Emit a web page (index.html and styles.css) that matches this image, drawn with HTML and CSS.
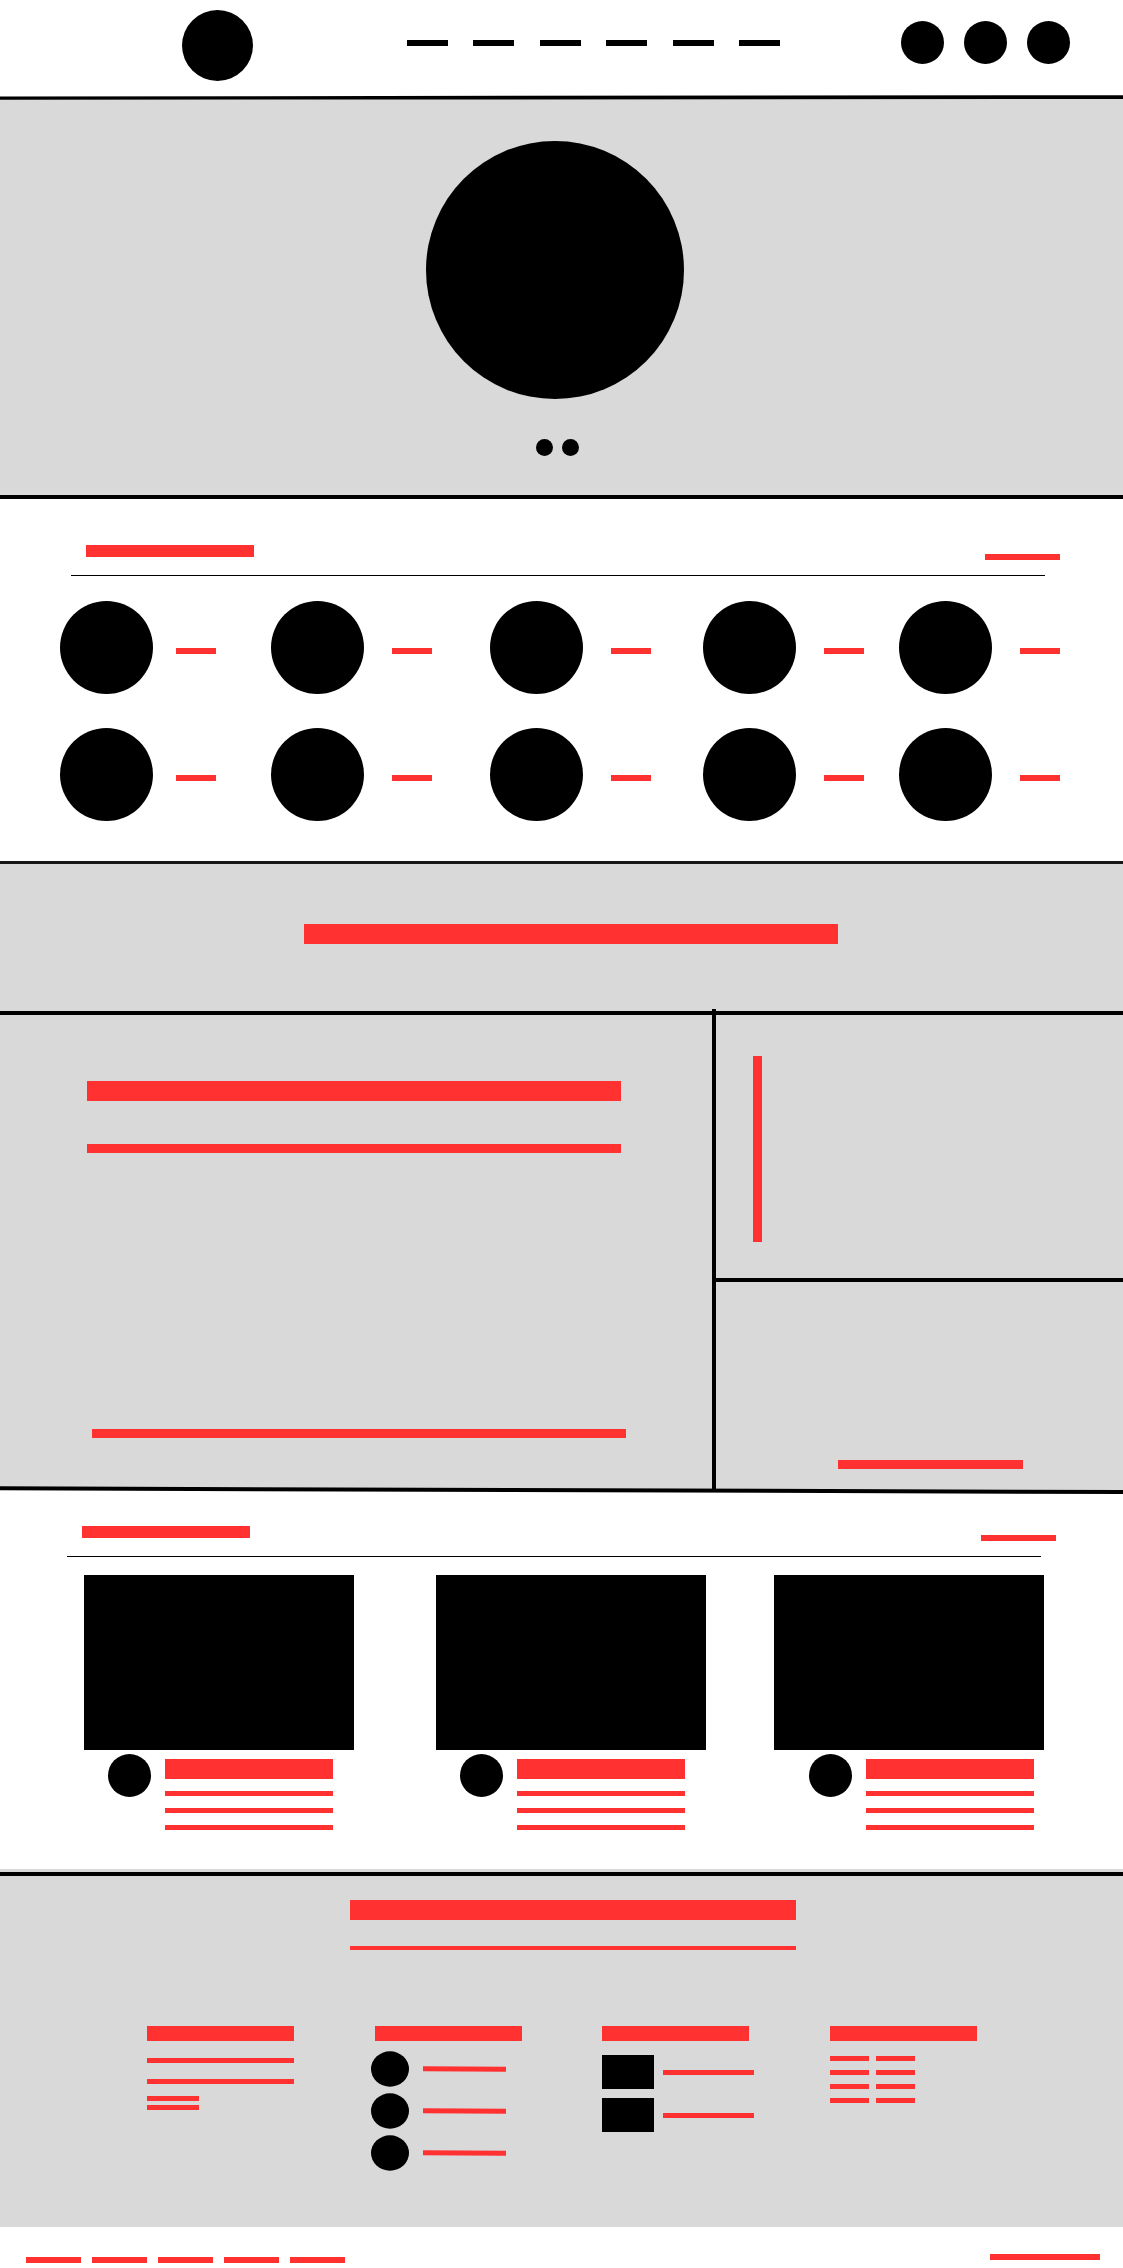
FILE: index.html
```html
<!DOCTYPE html>
<html lang="en">
<head>
<meta charset="utf-8">
<meta name="viewport" content="width=device-width, initial-scale=1">
<title>Home</title>
<link rel="stylesheet" href="styles.css">
</head>
<body>
<header class="header">
  <a class="dot logo" href="#" aria-label="Home"></a>
  <nav class="nav" aria-label="Main">
    <a class="nav-link" href="#" aria-label="Link 1"></a>
    <a class="nav-link" href="#" aria-label="Link 2"></a>
    <a class="nav-link" href="#" aria-label="Link 3"></a>
    <a class="nav-link" href="#" aria-label="Link 4"></a>
    <a class="nav-link" href="#" aria-label="Link 5"></a>
    <a class="nav-link" href="#" aria-label="Link 6"></a>
  </nav>
  <div class="actions">
    <button class="dot action" type="button" aria-label="Search"></button>
    <button class="dot action" type="button" aria-label="Account"></button>
    <button class="dot action" type="button" aria-label="Cart"></button>
  </div>
</header>
<svg class="divider divider-top" viewBox="0 0 100 5" preserveAspectRatio="none" aria-hidden="true"><path class="shade" d="M0 3L100 2V5H0Z"/><path d="M0 1.4L100 0.2V4L0 4.8Z"/></svg>

<main>
  <section class="hero">
    <div class="dot hero-image"></div>
    <div class="pager">
      <button class="dot pager-dot" type="button" aria-label="Slide 1"></button>
      <button class="dot pager-dot" type="button" aria-label="Slide 2"></button>
    </div>
  </section>

  <section class="categories">
    <div class="section-head">
      <div class="bar section-title"></div>
      <a class="bar section-link" href="#" aria-label="See all categories"></a>
    </div>
    <div class="category-grid">
      <a class="category" href="#" aria-label="Category 1"><span class="dot category-image"></span><span class="bar category-name"></span></a>
      <a class="category" href="#" aria-label="Category 2"><span class="dot category-image"></span><span class="bar category-name"></span></a>
      <a class="category" href="#" aria-label="Category 3"><span class="dot category-image"></span><span class="bar category-name"></span></a>
      <a class="category" href="#" aria-label="Category 4"><span class="dot category-image"></span><span class="bar category-name"></span></a>
      <a class="category" href="#" aria-label="Category 5"><span class="dot category-image"></span><span class="bar category-name"></span></a>
      <a class="category" href="#" aria-label="Category 6"><span class="dot category-image"></span><span class="bar category-name"></span></a>
      <a class="category" href="#" aria-label="Category 7"><span class="dot category-image"></span><span class="bar category-name"></span></a>
      <a class="category" href="#" aria-label="Category 8"><span class="dot category-image"></span><span class="bar category-name"></span></a>
      <a class="category" href="#" aria-label="Category 9"><span class="dot category-image"></span><span class="bar category-name"></span></a>
      <a class="category" href="#" aria-label="Category 10"><span class="dot category-image"></span><span class="bar category-name"></span></a>
    </div>
  </section>

  <section class="banner">
    <div class="bar banner-title"></div>
  </section>

  <section class="promos">
    <div class="promo promo-main">
      <div class="bar promo-title"></div>
      <div class="bar promo-text"></div>
      <a class="bar promo-text promo-more" href="#" aria-label="Read more"></a>
    </div>
    <div class="promo-side">
      <div class="promo promo-upper"><div class="bar promo-upright"></div></div>
      <div class="promo promo-lower"><a class="bar promo-action" href="#" aria-label="Open offer"></a></div>
    </div>
  </section>
  <svg class="divider divider-slope" viewBox="0 0 1123 8" preserveAspectRatio="none" aria-hidden="true"><path class="shade" d="M0 0H1123V6L0 2Z"/><path d="M0 0.3L1123 4V8L0 4.3Z"/><path d="M712 0H716V5H712Z"/></svg>

  <section class="articles">
    <div class="section-head">
      <div class="bar section-title"></div>
      <a class="bar section-link" href="#" aria-label="See all articles"></a>
    </div>
    <div class="card-row">
      <article class="card">
        <div class="card-image"></div>
        <div class="card-meta">
          <div class="dot avatar"></div>
          <div class="card-text"><div class="bar card-title"></div><div class="bar card-line"></div><div class="bar card-line"></div><div class="bar card-line"></div></div>
        </div>
      </article>
      <article class="card">
        <div class="card-image"></div>
        <div class="card-meta">
          <div class="dot avatar"></div>
          <div class="card-text"><div class="bar card-title"></div><div class="bar card-line"></div><div class="bar card-line"></div><div class="bar card-line"></div></div>
        </div>
      </article>
      <article class="card card-last">
        <div class="card-image"></div>
        <div class="card-meta">
          <div class="dot avatar"></div>
          <div class="card-text"><div class="bar card-title"></div><div class="bar card-line"></div><div class="bar card-line"></div><div class="bar card-line"></div></div>
        </div>
      </article>
    </div>
  </section>
</main>

<footer>
  <div class="footer-top">
    <div class="footer-intro">
      <div class="bar footer-title"></div>
      <div class="bar footer-lead"></div>
    </div>
    <div class="footer-columns">
      <div class="footer-column">
        <div class="bar column-title"></div>
        <div class="about">
          <div class="bar line"></div>
          <div class="bar line"></div>
          <div class="about-short"><div class="bar line"></div><div class="bar line"></div></div>
        </div>
      </div>
      <div class="footer-column">
        <div class="bar column-title"></div>
        <ul class="socials">
          <li><a class="social" href="#" aria-label="Social 1"><svg class="social-icon" viewBox="0 0 38 36" aria-hidden="true"><ellipse cx="19" cy="18" rx="19" ry="17.7"/></svg><svg class="social-name" viewBox="0 0 83 6" aria-hidden="true"><path d="M0 0.2L83 0.8V5.8L0 5.2Z"/></svg></a></li>
          <li><a class="social" href="#" aria-label="Social 2"><svg class="social-icon" viewBox="0 0 38 36" aria-hidden="true"><ellipse cx="19" cy="18" rx="19" ry="17.7"/></svg><svg class="social-name" viewBox="0 0 83 6" aria-hidden="true"><path d="M0 0.2L83 0.8V5.8L0 5.2Z"/></svg></a></li>
          <li><a class="social" href="#" aria-label="Social 3"><svg class="social-icon" viewBox="0 0 38 36" aria-hidden="true"><ellipse cx="19" cy="18" rx="19" ry="17.7"/></svg><svg class="social-name" viewBox="0 0 83 6" aria-hidden="true"><path d="M0 0.2L83 0.8V5.8L0 5.2Z"/></svg></a></li>
        </ul>
      </div>
      <div class="footer-column">
        <div class="bar column-title"></div>
        <ul class="posts">
          <li><a class="post" href="#" aria-label="Post 1"><span class="post-image"></span><span class="bar post-name"></span></a></li>
          <li><a class="post" href="#" aria-label="Post 2"><span class="post-image"></span><span class="bar post-name"></span></a></li>
        </ul>
      </div>
      <div class="footer-column">
        <div class="bar column-title"></div>
        <div class="tags">
          <a class="bar tag" href="#" aria-label="Tag 1"></a><a class="bar tag" href="#" aria-label="Tag 2"></a>
          <a class="bar tag" href="#" aria-label="Tag 3"></a><a class="bar tag" href="#" aria-label="Tag 4"></a>
          <a class="bar tag" href="#" aria-label="Tag 5"></a><a class="bar tag" href="#" aria-label="Tag 6"></a>
          <a class="bar tag" href="#" aria-label="Tag 7"></a><a class="bar tag" href="#" aria-label="Tag 8"></a>
        </div>
      </div>
    </div>
  </div>
  <div class="footer-bottom">
    <nav class="legal" aria-label="Legal">
      <a class="bar legal-link" href="#" aria-label="Legal 1"></a>
      <a class="bar legal-link" href="#" aria-label="Legal 2"></a>
      <a class="bar legal-link" href="#" aria-label="Legal 3"></a>
      <a class="bar legal-link" href="#" aria-label="Legal 4"></a>
      <a class="bar legal-link" href="#" aria-label="Legal 5"></a>
    </nav>
    <div class="bar copyright"></div>
  </div>
</footer>
</body>
</html>
```
FILE: styles.css
```css
:root {
  --ink: #000;
  --accent: #ff3131;
  --shade: #d9d9d9;
}

* { box-sizing: border-box; }

body {
  margin: 0;
  background: #fff;
  font-family: "Liberation Sans", Arial, sans-serif;
}

ul { margin: 0; padding: 0; list-style: none; }
a { display: block; }
button { padding: 0; border: 0; }

.bar { display: block; background: var(--accent); }
.dot { display: block; border-radius: 50%; background: var(--ink); }

/* Header */
.header {
  display: flex;
  justify-content: space-between;
  align-items: flex-start;
  padding: 10px 53px 14px 182px;
}
.logo { width: 71px; height: 71px; }
.nav {
  display: flex;
  justify-content: space-between;
  width: 406px;
  padding: 30px 0 0 33px;
}
.nav-link { width: 41px; height: 6px; background: var(--ink); }
.actions { display: flex; gap: 20px; padding-top: 11px; }
.action { width: 43px; height: 43px; }

.divider { display: block; width: 100%; }
.divider .shade { fill: var(--shade); }
.divider-top { height: 5px; }
.divider-slope { height: 8px; }

/* Hero */
.hero {
  display: flex;
  flex-direction: column;
  align-items: center;
  gap: 40px;
  padding: 41px 14px 39px 0;
  background: var(--shade);
  border-bottom: 4px solid var(--ink);
}
.hero-image { width: 258px; height: 258px; }
.pager { display: flex; gap: 9px; padding-left: 6px; }
.pager-dot { width: 17px; height: 17px; }

/* Section heading with its rule */
.section-head {
  display: flex;
  justify-content: space-between;
  height: 31px;
  margin: 0 78px 0 71px;
  padding-left: 15px;
  border-bottom: 1px solid var(--ink);
}
.section-title { width: 168px; height: 12px; }
.section-link { width: 75px; height: 6px; margin: 9px -15px 0 0; }

/* Categories */
.categories { padding: 46px 0 40px; }
.category-grid {
  display: grid;
  grid-template-columns: 211fr 219fr 213fr 196fr 161px;
  row-gap: 34px;
  margin: 25px 63px 0 60px;
}
.category { display: flex; align-items: center; gap: 28px; }
.category:nth-child(5n + 1) { gap: 23px; }
.category-image { width: 93px; height: 93px; }
.category-name { width: 40px; height: 6px; margin-top: 6px; }

/* Banner */
.banner {
  padding: 60px 0 67px 19px;
  background: var(--shade);
  border-top: 3px solid #181818;
}
.banner-title { width: 534px; height: 20px; margin: 0 auto; }

/* Promos */
.promos {
  display: grid;
  grid-template-columns: 712fr 411fr;
  border-top: 4px solid var(--ink);
}
.promo { background: var(--shade); }
.promo-main { display: flex; flex-direction: column; padding: 66px 86px 48px 87px; }
.promo-title { width: 534px; height: 20px; }
.promo-text { width: 534px; height: 9px; margin-top: 43px; }
.promo-more { margin-top: auto; align-self: flex-end; }
/* The upright rule rises slightly above the horizontal one */
.promo-side {
  display: flex;
  flex-direction: column;
  margin-top: -6px;
  padding-top: 6px;
  border-left: 4px solid var(--ink);
}
.promo-upper { padding: 41px 37px 36px; border-bottom: 4px solid var(--ink); }
.promo-upright { width: 9px; height: 186px; }
.promo-lower { padding: 178px 78px 17px 100px; }
.promo-action { width: 185px; height: 9px; margin: 0 auto; }

/* Articles */
.articles { padding: 32px 0 39px; }
.articles .section-head { margin: 0 82px 0 67px; }
.card-row {
  display: grid;
  grid-template-columns: 352fr 338fr 270px;
  margin: 18px 79px 0 84px;
}
.card { width: 270px; }
.card-image { height: 175px; background: var(--ink); }
.card-meta { display: flex; gap: 14px; padding: 4px 0 0 24px; }
.card-last .card-meta { padding-left: 35px; }
.avatar { width: 43px; height: 43px; }
.card-text { width: 168px; padding-top: 5px; }
.card-title { height: 20px; }
.card-line { height: 5px; margin-top: 12px; }

/* Footer */
.footer-top {
  padding: 3px 0 56px;
  background: var(--shade);
}
.footer-top::before { content: ""; display: block; height: 4px; background: var(--ink); }
.footer-intro { display: grid; justify-content: center; gap: 26px; padding: 24px 0 0 22px; }
.footer-title, .footer-lead { width: 446px; }
.footer-title { height: 20px; }
.footer-lead { height: 4px; }
.footer-columns {
  display: flex;
  justify-content: space-between;
  margin: 76px 146px 0 147px;
}
.footer-column { width: 147px; }
.column-title { height: 15px; }
.line { height: 5px; }
.about { display: grid; gap: 16px; padding-top: 17px; }
.about-short { display: grid; gap: 4px; width: 52px; margin-top: -4px; }
.socials { display: grid; gap: 6px; margin: 10px 0 0 -4px; }
.social { display: flex; align-items: center; gap: 14px; }
.social-icon { width: 38px; height: 36px; }
.social-name { width: 83px; height: 6px; fill: var(--accent); }
.posts { display: grid; gap: 9px; padding-top: 14px; }
.post { display: flex; align-items: center; gap: 9px; }
.post-image { flex: none; width: 52px; height: 34px; background: var(--ink); }
.post-name { flex: none; width: 91px; height: 5px; }
.tags { display: grid; grid-template-columns: 39px 39px; gap: 9px 7px; padding-top: 15px; }
.tag { height: 5px; }

.footer-bottom {
  display: flex;
  justify-content: space-between;
  padding: 27px 23px 5px 26px;
}
.legal { display: flex; gap: 11px; padding-top: 3px; }
.legal-link { width: 55px; height: 6px; }
.copyright { width: 110px; height: 6px; }
```
